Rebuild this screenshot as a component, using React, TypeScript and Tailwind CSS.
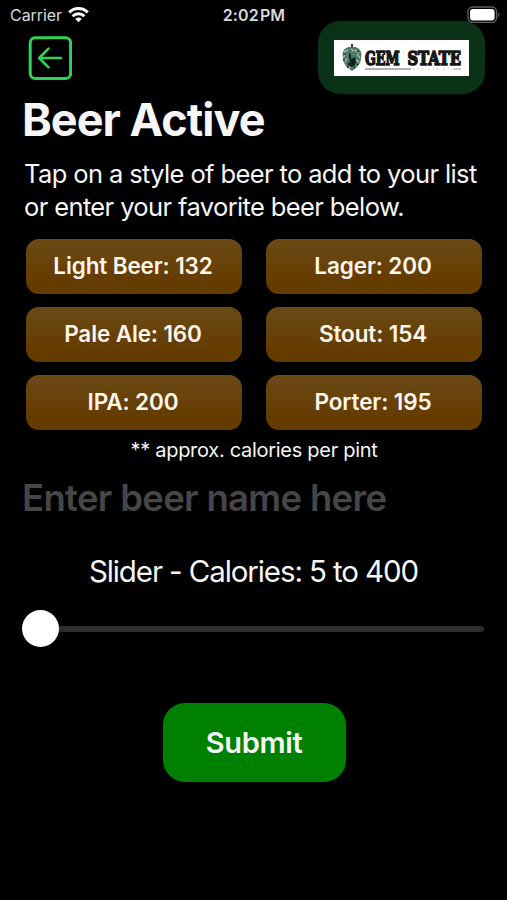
import { useState } from 'react';

const beers = [
  { name: 'Light Beer', calories: 132 },
  { name: 'Lager', calories: 200 },
  { name: 'Pale Ale', calories: 160 },
  { name: 'Stout', calories: 154 },
  { name: 'IPA', calories: 200 },
  { name: 'Porter', calories: 195 },
]

function StatusBar() {
  return (
    <div className="grid h-[30px] grid-cols-3 items-center pl-[10px] pr-[6px] text-[16px] text-[#d8d8d8]">
      <div className="flex items-center gap-[6px]">
        <span className="tracking-[-0.050px]">Carrier</span>
        <svg width="21" height="16" viewBox="0 0 21 16" fill="none" stroke="#fff" strokeWidth="2.9">
          <path d="M1.2 5.4a13.2 13.2 0 0 1 18.6 0" />
          <path d="M4.6 9.2a8.4 8.4 0 0 1 11.8 0" />
          <path d="M10.5 15.2 7.3 11.9a4.6 4.6 0 0 1 6.4 0Z" fill="#fff" stroke="none" />
        </svg>
      </div>
      <span className="pr-[3px] text-center font-semibold tracking-[0.1px] [word-spacing:-3px]">2:02 PM</span>
      <svg className="relative z-10 justify-self-end" width="34" height="18" viewBox="0 0 34 18">
        <rect x="1" y="1" width="28.6" height="15.4" rx="4.8" fill="#000" stroke="#5c5f5d" strokeWidth="1.4" />
        <rect x="3" y="3" width="24.6" height="11.4" rx="3" fill="#fff" />
        <path d="M31.2 6.4v4.8a2.8 2.8 0 0 0 0-4.8Z" fill="#5c5f5d" />
      </svg>
    </div>
  )
}

function Logo() {
  return (
    <div className="flex h-[73px] w-[167px] items-center justify-center rounded-[22px] bg-[#0a3216]">
      <svg width="135" height="36" viewBox="0 0 135 36">
        <rect width="135" height="36" fill="#fff" />
        {/* hop cone */}
        <path d="M18 4v5" stroke="#222" strokeWidth="1.8" />
        <path d="M18 7.5c3-1 6 0 8 2.5 2 3 1.5 6 1 9-.5 4-2.500 7-5 9l-4 3-4-3c-2.500-2-4.500-5-5-9-.5-3-1-6 1-9 2-2.500 5-3.500 8-2.500Z" fill="#4d7c66" />
        <path d="M10 12l4-2M9 17l4-3M10 22l3-3M12 26l3-2M21 10l4 3M23 14l3 4M22 20l3 2M19 25l3 1M17 9l3 2M15 28l2-2" stroke="#b8cec3" strokeWidth="1.1" />
        <path d="M15 12l2 3 0 4 4-2 1 4-1 5-4 1-4-3 3-2-1-5Z" fill="#15211c" />
        <path d="M9.500 14l3 1M9 20l2 1M23 11l2 1M23 24l1 1M13 25l1 3M20 28l1-1" stroke="#15211c" strokeWidth="1.2" />
        <g transform="translate(31 24.800) scale(1 1.450)" fill="#171717" stroke="#171717" strokeWidth="1.1" fontSize="12.500" fontWeight="700" fontFamily="'DejaVu Serif', serif">
          <text x="0" y="0" textLength="34.500" lengthAdjust="spacingAndGlyphs">GEM</text>
          <text x="42.500" y="0" textLength="53.500" lengthAdjust="spacingAndGlyphs">STATE</text>
        </g>
        <path d="M31 29h46" stroke="#666" strokeWidth="1" />
        <path d="M79 29h42" stroke="#bbb" strokeWidth="0.8" strokeDasharray="2 3 1 2 3 4" />
        <path d="M120 29h7" stroke="#777" strokeWidth="0.8" />
      </svg>
    </div>
  )
}

export default function App() {

  const [beer, setBeer] = useState('')

  return (
    <div className="h-[900px] w-[507px] overflow-hidden bg-black font-['Inter',sans-serif] text-[#f6f6f6]">
      <StatusBar />

      <div className="-mt-[9px] flex items-center justify-between pl-[28px] pr-[22px]">
        <button type="button" aria-label="Back">
          <svg width="44" height="44" viewBox="0 0 44 44" fill="none" stroke="#30d158" strokeWidth="3" strokeLinecap="round" strokeLinejoin="round">
            <rect x="2.200" y="1.800" width="40.400" height="40.700" rx="5" />
            <path d="M33 22H11.500M20.500 12.700l-9.300 9.300 9.300 9.300" strokeWidth="2.600" />
          </svg>
        </button>
        <Logo />
      </div>

      <div className="flex flex-col px-[22px]">
        <h1 className="text-[45px] leading-[52px] font-bold tracking-[-0.950px]">Beer Active</h1>

        <p className="mt-[12px] pl-[2px] text-[25.500px] leading-[32.500px] tracking-[-0.620px] whitespace-nowrap">
          Tap on a style of beer to add to your list<br />
          or enter your favorite beer below.
        </p>

        <div className="mt-[16px] grid grid-cols-2 gap-x-[24px] gap-y-[13px] pl-[4px] pr-[3px]">
          {beers.map((b) => (
            <button
              key={b.name}
              type="button"
              onClick={() => setBeer(b.name)}
              className="h-[55px] rounded-[13px] bg-linear-to-b from-[#6b4a16] to-[#653c00] to-75% pr-[2px] pb-[2px] text-[22.500px] font-semibold tracking-[-0.120px] text-[#fff6ee]"
            >
              {b.name}: {b.calories}
            </button>
          ))}
        </div>

        <p className="mt-[5px] pl-[1px] text-center text-[20px] leading-[30px] tracking-[-0.290px]">** approx. calories per pint</p>

        <input
          value={beer}
          onChange={(e) => setBeer(e.target.value)}
          placeholder="Enter beer name here"
          className="mt-[8px] h-[50px] w-full bg-transparent text-[36.500px] font-semibold tracking-[-0.680px] outline-none placeholder:text-[#464648]"
        />

        <p className="mt-[28px] text-center text-[29.500px] leading-[40px] tracking-[-1.100px]">Slider - Calories: 5 to 400</p>

        <div className="mt-[18px] flex h-[38px] items-center pr-[1px]">
          <div className="size-[37px] rounded-full bg-white" />
          <div className="mt-[2px] h-[5.500px] flex-1 rounded-r-full bg-[#2d2d2f]" />
        </div>

        <div className="mt-[56px] flex justify-center pl-[1px]">
          <button type="button" className="h-[79px] w-[183px] rounded-[22px] bg-[#008000] text-[29px] font-semibold tracking-[-0.350px]">
            Submit
          </button>
        </div>
      </div>
    </div>
  )
}
